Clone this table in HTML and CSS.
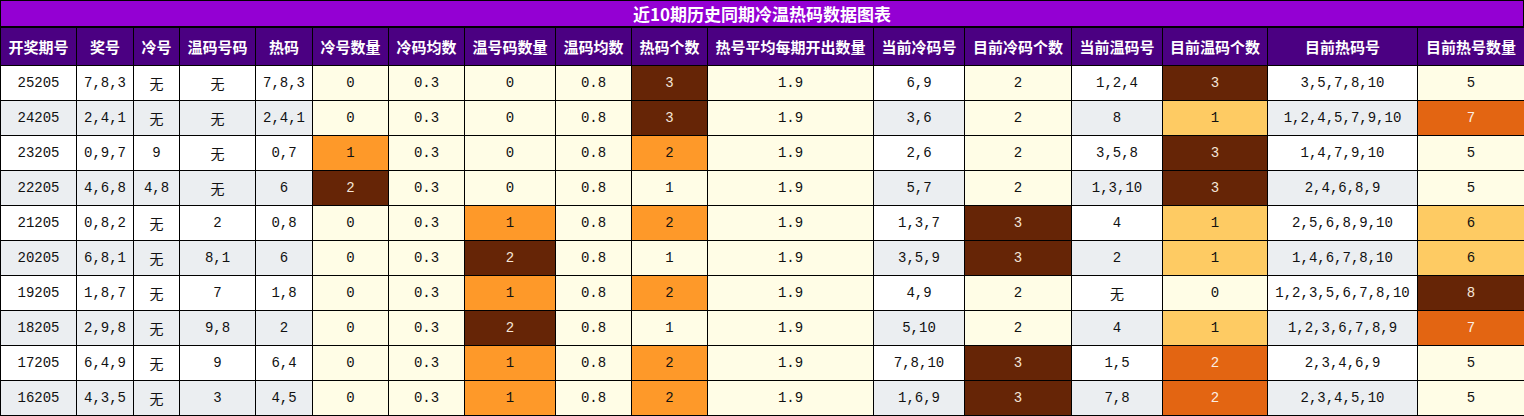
FILE: index.html
```html
<!DOCTYPE html>
<html lang="zh">
<head>
<meta charset="utf-8">
<title>近10期历史同期冷温热码数据图表</title>
<link rel="stylesheet" href="styles.css">
</head>
<body>
<div class="chart">
  <div class="title">近10期历史同期冷温热码数据图表</div>
  <table class="grid">
    <colgroup>
      <col style="width:76px"><col style="width:57px"><col style="width:46px"><col style="width:76px"><col style="width:57px"><col style="width:76px"><col style="width:76px"><col style="width:91px"><col style="width:76px"><col style="width:76px"><col style="width:166px"><col style="width:91px"><col style="width:107px"><col style="width:91px"><col style="width:105px"><col style="width:150px"><col style="width:107px">
    </colgroup>
    <thead>
      <tr>
        <th>开奖期号</th><th>奖号</th><th>冷号</th><th>温码号码</th><th>热码</th><th>冷号数量</th><th>冷码均数</th><th>温号码数量</th><th>温码均数</th><th>热码个数</th><th>热号平均每期开出数量</th><th>当前冷码号</th><th>目前冷码个数</th><th>当前温码号</th><th>目前温码个数</th><th>目前热码号</th><th>目前热号数量</th>
      </tr>
    </thead>
    <tbody>
      <tr><td>25205</td><td>7,8,3</td><td>无</td><td>无</td><td>7,8,3</td><td class="y">0</td><td class="y">0.3</td><td class="y">0</td><td class="y">0.8</td><td class="c2">3</td><td class="y">1.9</td><td>6,9</td><td class="y">2</td><td>1,2,4</td><td class="c2">3</td><td>3,5,7,8,10</td><td class="y">5</td></tr>
      <tr><td>24205</td><td>2,4,1</td><td>无</td><td>无</td><td>2,4,1</td><td class="y">0</td><td class="y">0.3</td><td class="y">0</td><td class="y">0.8</td><td class="c2">3</td><td class="y">1.9</td><td>3,6</td><td class="y">2</td><td>8</td><td class="c3">1</td><td>1,2,4,5,7,9,10</td><td class="c4">7</td></tr>
      <tr><td>23205</td><td>0,9,7</td><td>9</td><td>无</td><td>0,7</td><td class="c1">1</td><td class="y">0.3</td><td class="y">0</td><td class="y">0.8</td><td class="c1">2</td><td class="y">1.9</td><td>2,6</td><td class="y">2</td><td>3,5,8</td><td class="c2">3</td><td>1,4,7,9,10</td><td class="y">5</td></tr>
      <tr><td>22205</td><td>4,6,8</td><td>4,8</td><td>无</td><td>6</td><td class="c2">2</td><td class="y">0.3</td><td class="y">0</td><td class="y">0.8</td><td class="y">1</td><td class="y">1.9</td><td>5,7</td><td class="y">2</td><td>1,3,10</td><td class="c2">3</td><td>2,4,6,8,9</td><td class="y">5</td></tr>
      <tr><td>21205</td><td>0,8,2</td><td>无</td><td>2</td><td>0,8</td><td class="y">0</td><td class="y">0.3</td><td class="c1">1</td><td class="y">0.8</td><td class="c1">2</td><td class="y">1.9</td><td>1,3,7</td><td class="c2">3</td><td>4</td><td class="c3">1</td><td>2,5,6,8,9,10</td><td class="c3">6</td></tr>
      <tr><td>20205</td><td>6,8,1</td><td>无</td><td>8,1</td><td>6</td><td class="y">0</td><td class="y">0.3</td><td class="c2">2</td><td class="y">0.8</td><td class="y">1</td><td class="y">1.9</td><td>3,5,9</td><td class="c2">3</td><td>2</td><td class="c3">1</td><td>1,4,6,7,8,10</td><td class="c3">6</td></tr>
      <tr><td>19205</td><td>1,8,7</td><td>无</td><td>7</td><td>1,8</td><td class="y">0</td><td class="y">0.3</td><td class="c1">1</td><td class="y">0.8</td><td class="c1">2</td><td class="y">1.9</td><td>4,9</td><td class="y">2</td><td>无</td><td class="y">0</td><td>1,2,3,5,6,7,8,10</td><td class="c2">8</td></tr>
      <tr><td>18205</td><td>2,9,8</td><td>无</td><td>9,8</td><td>2</td><td class="y">0</td><td class="y">0.3</td><td class="c2">2</td><td class="y">0.8</td><td class="y">1</td><td class="y">1.9</td><td>5,10</td><td class="y">2</td><td>4</td><td class="c3">1</td><td>1,2,3,6,7,8,9</td><td class="c4">7</td></tr>
      <tr><td>17205</td><td>6,4,9</td><td>无</td><td>9</td><td>6,4</td><td class="y">0</td><td class="y">0.3</td><td class="c1">1</td><td class="y">0.8</td><td class="c1">2</td><td class="y">1.9</td><td>7,8,10</td><td class="c2">3</td><td>1,5</td><td class="c4">2</td><td>2,3,4,6,9</td><td class="y">5</td></tr>
      <tr><td>16205</td><td>4,3,5</td><td>无</td><td>3</td><td>4,5</td><td class="y">0</td><td class="y">0.3</td><td class="c1">1</td><td class="y">0.8</td><td class="c1">2</td><td class="y">1.9</td><td>1,6,9</td><td class="c2">3</td><td>7,8</td><td class="c4">2</td><td>2,3,4,5,10</td><td class="y">5</td></tr>
    </tbody>
  </table>
</div>
</body>
</html>
```
FILE: styles.css
```css
html, body {
  margin: 0;
  padding: 0;
  background: #ffffff;
}

.chart {
  width: 1524px;
}

.title {
  height: 25px;
  line-height: 25px;
  border: 1px solid #000;
  background: #9400d3;
  color: #ffffff;
  font-family: "Noto Sans CJK SC", "Noto Sans", sans-serif;
  font-weight: bold;
  font-size: 17px;
  text-align: center;
}

.grid {
  width: 1524px;
  border-collapse: collapse;
  table-layout: fixed;
}

.grid th,
.grid td {
  border: 1px solid #000;
  padding: 0;
  text-align: center;
  white-space: nowrap;
  overflow: hidden;
}

.grid th {
  height: 37px;
  background: #4b0082;
  color: #ffffff;
  font-family: "Noto Sans CJK SC", "Noto Sans", sans-serif;
  font-weight: bold;
  font-size: 15px;
}

.grid td {
  height: 34px;
  background: #ffffff;
  color: #111111;
  font-family: "Liberation Mono", "Noto Sans CJK SC", monospace;
  font-size: 14px;
}

.grid tbody tr:nth-child(even) td {
  background: #ebeef1;
}

.grid tbody tr td.y {
  background: #fffde6;
}

.grid tbody tr td.c1 {
  background: #fe9929;
  color: #111111;
}

.grid tbody tr td.c2 {
  background: #662506;
  color: #f5e6d8;
}

.grid tbody tr td.c3 {
  background: #fecb63;
  color: #111111;
}

.grid tbody tr td.c4 {
  background: #e36512;
  color: #fbeee4;
}
```
